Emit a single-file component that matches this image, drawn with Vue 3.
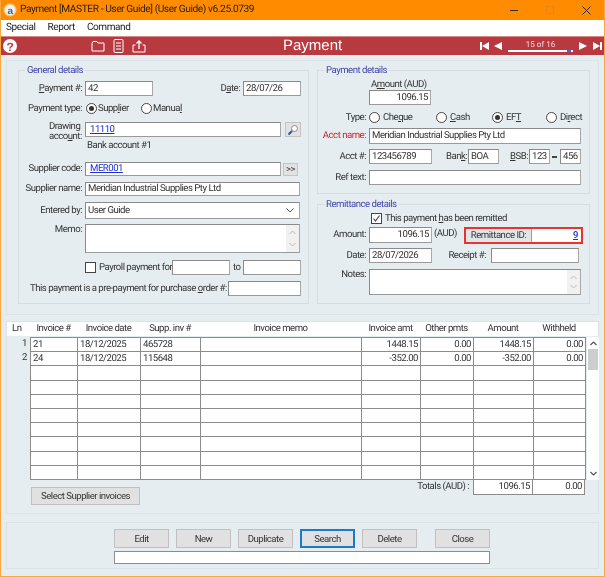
<script setup>
const headers = [
  { t: 'Invoice #', w: 47 }, { t: 'Invoice date', w: 63 }, { t: 'Supp. inv #', w: 60 },
  { t: 'Invoice memo', w: 161 }, { t: 'Invoice amt', w: 59 }, { t: 'Other pmts', w: 53 },
  { t: 'Amount', w: 60 }, { t: 'Withheld', w: 52 }
]
const data = [
  ['21', '18/12/2025', '465728', '', '1448.15', '0.00', '1448.15', '0.00'],
  ['24', '18/12/2025', '115648', '', '-352.00', '0.00', '-352.00', '0.00']
]
const rows = Array.from({ length: 10 }, (_, i) => data[i] || ['', '', '', '', '', '', '', ''])
const buttons = ['Edit', 'New', 'Duplicate', 'Search', 'Delete', 'Close']
</script>

<template>
  <div class="window">
    <header class="title">
      <svg class="logo" width="14" height="14" viewBox="0 0 14 14">
        <circle cx="7" cy="7" r="6.500" fill="#f4c98a" />
        <circle cx="7" cy="7" r="5" fill="#f2f2f2" />
        <text x="7" y="10.500" text-anchor="middle" font-size="10" font-weight="700" font-family="Liberation Sans" fill="#2e6f9e">a</text>
      </svg>
      <span class="title-text">Payment [MASTER - User Guide] (User Guide) v6.25.0739</span>
      <div class="win-btns">
        <svg width="9" height="9" viewBox="0 0 9 9"><path d="M0 4.500H8" stroke="#3a2a10" stroke-width="1" /></svg>
        <svg width="9" height="9" viewBox="0 0 9 9"><rect x="0.500" y="0.500" width="7" height="7" fill="none" stroke="#e5851a" /></svg>
        <svg width="9" height="9" viewBox="0 0 9 9"><path d="M0.500 0.500L8.500 8.500M8.500 0.500L0.500 8.500" stroke="#3a2a10" stroke-width="1" /></svg>
      </div>
    </header>
    <nav class="menu"><span>Special</span><span>Report</span><span>Command</span></nav>
    <div class="redbar">
      <svg class="help" width="14" height="14" viewBox="0 0 14 14">
        <circle cx="7" cy="7" r="7" fill="#fff" />
        <text x="7" y="11.500" text-anchor="middle" font-size="12" font-weight="700" font-family="Liberation Sans" fill="#b83a40">?</text>
      </svg>
      <div class="tools">
        <svg width="14" height="12" viewBox="0 0 14 12"><path d="M1 3V11H13V3H7L6 1.500H2L1 3Z" fill="none" stroke="#fff" /></svg>
        <svg width="11" height="14" viewBox="0 0 11 14"><rect x="1" y="0.500" width="9" height="13" rx="1" fill="none" stroke="#fff" /><path d="M3 4H8M3 7H8M3 10H8" stroke="#fff" /></svg>
        <svg width="14" height="13" viewBox="0 0 14 13"><path d="M3.500 5H1V12H13V5H10.500" fill="none" stroke="#fff" /><path d="M7 9V1M4.500 3.500L7 1L9.500 3.500" fill="none" stroke="#fff" stroke-width="1.300" /></svg>
      </div>
      <div class="bar-title">Payment</div>
      <div class="pager">
        <svg width="9" height="8" viewBox="0 0 9 8"><path d="M0 0H2V8H0ZM9 0V8L2 4Z" fill="#fff" /></svg>
        <svg class="pg2" width="8" height="8" viewBox="0 0 8 8"><path d="M8 0V8L0 4Z" fill="#fff" /></svg>
        <div class="slider"><span class="count">15 of 16</span><span class="track"><i></i></span></div>
        <svg class="pg3" width="8" height="8" viewBox="0 0 8 8"><path d="M0 0V8L8 4Z" fill="#fff" /></svg>
        <svg class="pg4" width="9" height="8" viewBox="0 0 9 8"><path d="M0 0V8L7 4ZM7 0H9V8H7Z" fill="#fff" /></svg>
      </div>
    </div>

    <section class="panel top">
      <div class="group general">
        <span class="legend">General details</span>
        <div class="row h15">
          <label class="lbl"><u>P</u>ayment #:</label>
          <div class="field w68">42</div>
          <label class="date-l">D<u>a</u>te:</label>
          <div class="field w58">28/07/26</div>
        </div>
        <div class="row h15 mt5">
          <label class="lbl">Payment type:</label>
          <span class="radio on r1"></span><span class="rt st">Supp<u>l</u>ier</span>
          <span class="radio"></span><span class="rt">Manua<u>l</u></span>
        </div>
        <div class="row h15 mt6">
          <label class="lbl two">Drawing<br />acco<u>u</u>nt:</label>
          <div class="field w196 link">11110</div>
          <button class="mini glass">
            <svg width="12" height="12" viewBox="0 0 12 12"><circle cx="7.500" cy="4.500" r="3" fill="#fff" stroke="#8a8a8a" /><path d="M5 7L1.500 10.500" stroke="#245a96" stroke-width="2" /></svg>
          </button>
        </div>
        <div class="row bank">Bank account #1</div>
        <div class="row h14 mt10">
          <label class="lbl">Supplier code:</label>
          <div class="field w196 link">MER001</div>
          <button class="mini more">&gt;&gt;</button>
        </div>
        <div class="row h14 mt6">
          <label class="lbl">Supplier name:</label>
          <div class="field w215">Meridian Industrial Supplies Pty Ltd</div>
        </div>
        <div class="row h17 mt6">
          <label class="lbl">Entered by:</label>
          <div class="field w215 select">User Guide
            <svg width="8" height="5" viewBox="0 0 8 5"><path d="M0.500 0.500L4 4L7.500 0.500" fill="none" stroke="#555" /></svg>
          </div>
        </div>
        <div class="row h29 mt5 top-a">
          <label class="lbl">Memo:</label>
          <div class="field w215 area">
            <div class="sb">
              <svg width="7" height="5" viewBox="0 0 7 5"><path d="M0.500 4L3.500 1L6.500 4" fill="none" stroke="#bbb" /></svg>
              <svg width="7" height="5" viewBox="0 0 7 5"><path d="M0.500 1L3.500 4L6.500 1" fill="none" stroke="#bbb" /></svg>
            </div>
          </div>
        </div>
        <div class="row h15 mt7">
          <span class="check c1"></span>
          <span class="payroll">Payroll payment for</span>
          <div class="field w58"></div>
          <span class="to">to</span>
          <div class="field w58"></div>
        </div>
        <div class="row h15 mt6">
          <span class="prepay">This payment is a pre-payment for purchase <u>o</u>rder #:</span>
          <div class="field w73"></div>
        </div>
      </div>

      <div class="side">
        <div class="group payment">
          <span class="legend">Payment details</span>
          <div class="amount-l">A<u>m</u>ount (AUD)</div>
          <div class="row h15 ind"><div class="field num w62">1096.15</div></div>
          <div class="row h15 mt5">
            <label class="lbl2">Type:</label>
            <span class="radio"></span><span class="rt tt1">Che<u>q</u>ue</span>
            <span class="radio"></span><span class="rt tt2"><u>C</u>ash</span>
            <span class="radio on"></span><span class="rt tt3">EF<u>T</u></span>
            <span class="radio"></span><span class="rt tt4">Di<u>r</u>ect</span>
          </div>
          <div class="row h16 mt3">
            <label class="lbl2 red">Acct name:</label>
            <div class="field w212">Meridian Industrial Supplies Pty Ltd</div>
          </div>
          <div class="row h15 mt5">
            <label class="lbl2">Acct #:</label>
            <div class="field w63">123456789</div>
            <label class="bank-l">Ban<u>k</u>:</label>
            <div class="field w31">BOA</div>
            <label class="bsb-l"><u>B</u>SB:</label>
            <div class="field w21">123</div>
            <span class="dash"></span>
            <div class="field w21">456</div>
          </div>
          <div class="row h15 mt6">
            <label class="lbl2">Ref text:</label>
            <div class="field w212"></div>
          </div>
        </div>

        <div class="group remit">
          <span class="legend">Remittance details</span>
          <div class="row h13 ind2">
            <span class="check on">
              <svg width="9" height="9" viewBox="0 0 9 9"><path d="M1.500 4.500L3.500 7L7.500 1.500" fill="none" stroke="#444" stroke-width="1.100" /></svg>
            </span>
            <span class="remitted">This payment <u>h</u>as been remitted</span>
          </div>
          <div class="row h16 mt2">
            <label class="lbl2">Amount:</label>
            <div class="field num w63">1096.15</div>
            <span class="aud">(AUD)</span>
            <div class="rid">
              <span class="rid-l">Remittance ID:</span>
              <span class="rid-v">9</span>
            </div>
          </div>
          <div class="row h15 mt5">
            <label class="lbl2">Date:</label>
            <div class="field w63">28/07/2026</div>
            <label class="rec-l">Receipt #:</label>
            <div class="field w88"></div>
          </div>
          <div class="row h26 mt6 top-a">
            <label class="lbl2">Notes:</label>
            <div class="field w212 area">
              <div class="sb">
                <svg width="7" height="5" viewBox="0 0 7 5"><path d="M0.500 4L3.500 1L6.500 4" fill="none" stroke="#bbb" /></svg>
                <svg width="7" height="5" viewBox="0 0 7 5"><path d="M0.500 1L3.500 4L6.500 1" fill="none" stroke="#bbb" /></svg>
              </div>
            </div>
          </div>
        </div>
      </div>
    </section>

    <section class="panel invoices">
      <div class="thead">
        <span class="ln">Ln</span>
        <span v-for="h in headers" :key="h.t" class="th" :style="{ width: h.w + 'px' }">{{ h.t }}</span>
      </div>
      <div class="tbody">
        <div class="nums"><span>1</span><span>2</span></div>
        <div class="grid">
          <template v-for="(r, i) in rows" :key="i">
            <div v-for="(c, j) in r" :key="j" class="cell" :class="{ numeric: j > 3 }">{{ c }}</div>
          </template>
        </div>
        <div class="scroll">
          <svg width="7" height="5" viewBox="0 0 7 5"><path d="M0.500 4L3.500 1L6.500 4" fill="none" stroke="#555" stroke-width="1.200" /></svg>
          <span class="thumb"></span>
          <svg class="down" width="7" height="5" viewBox="0 0 7 5"><path d="M0.500 1L3.500 4L6.500 1" fill="none" stroke="#555" stroke-width="1.200" /></svg>
        </div>
      </div>
      <div class="foot">
        <button class="btn select-btn">Select Supplier invoices</button>
        <span class="totals">Totals (AUD) :</span>
        <div class="tot t-a">1096.15</div>
        <div class="tot t-b">0.00</div>
      </div>
    </section>

    <section class="panel actions">
      <div class="btn-row">
        <button v-for="b in buttons" :key="b" class="btn act" :class="{ focus: b === 'Search', close: b === 'Close' }">{{ b }}</button>
      </div>
      <div class="status"></div>
    </section>
  </div>
</template>

<style>
html, body { margin: 0; padding: 0; background: #e6edf0; }
</style>

<style scoped>
.window {
  width: 605px; height: 577px; box-sizing: border-box; overflow: hidden; filter: blur(0.300px);
  background: #e6edf0; border-left: 1px solid #f5a940; border-right: 1px solid #f5a940; border-bottom: 1px solid #f5a940;
  font: 9.600px/12px Roboto, "Liberation Sans", Arial, sans-serif; letter-spacing: -0.500px; color: #333; text-rendering: geometricPrecision;
}
.title { height: 20px; margin: 0 -1px; background: #ff8c00; display: flex; align-items: center; padding-left: 3px; color: #33200a; }
.logo { flex: none; }
.title-text { margin-left: 3px; font-size: 10.200px; letter-spacing: -0.430px; }
.win-btns { margin-left: auto; display: flex; gap: 27px; margin-right: 14px; }
.menu { height: 16px; background: #fff; display: flex; align-items: center; font-size: 10px; letter-spacing: -0.400px; color: #222; padding-left: 5px; gap: 12px; }
.redbar { height: 19px; margin: 0 -1px; border-top: 1px solid #d98a80; box-sizing: border-box; background: #b83a40; display: flex; align-items: center; padding-left: 3px; position: relative; color: #fff; }
.help { flex: none; }
.tools { display: flex; align-items: center; gap: 8px; margin-left: 74px; }
.bar-title { position: absolute; left: 283px; top: 0; font: 15px/18px "Liberation Sans", Arial, sans-serif; letter-spacing: 0; }
.pager { margin-left: auto; margin-right: 3px; display: flex; align-items: center; }
.pg2 { margin-left: 5px; }
.slider { width: 65px; margin-left: 6px; display: flex; flex-direction: column; align-items: center; }
.count { font-size: 8px; line-height: 9px; color: #f2d9d9; letter-spacing: 0; }
.track { width: 65px; height: 2px; background: #fff; position: relative; display: block; margin-top: 1px; }
.track i { position: absolute; right: 2px; top: 0; width: 4px; height: 2px; background: #2a6cf0; }
.pg3 { margin-left: 6px; }
.pg4 { margin-left: 6px; }

.panel { border: 1px solid #dbe3e6; box-sizing: border-box; margin-left: 5px; width: 593px; }
.top { height: 255px; margin-top: 5px; padding: 9px 0 0 11px; display: flex; gap: 8px; }
.group { border: 1px solid #d5dde0; box-sizing: border-box; position: relative; }
.legend { position: absolute; left: 6px; top: -6px; background: #e6edf0; padding: 0 2px; color: #4046a8; line-height: 12px; font-size: 9.600px; letter-spacing: -0.500px; }
.general { width: 291px; height: 234px; padding-top: 10px; }
.side { width: 273px; display: flex; flex-direction: column; gap: 10px; }
.payment { height: 124px; padding-top: 6px; }
.remit { height: 100px; padding-top: 7px; }

.row { display: flex; align-items: center; }
.top-a { align-items: flex-start; }
.h13 { height: 13px; } .h14 { height: 14px; } .h15 { height: 15px; } .h16 { height: 16px; } .h17 { height: 17px; } .h26 { height: 26px; } .h29 { height: 29px; }
.mt2 { margin-top: 2px; } .mt3 { margin-top: 3px; } .mt5 { margin-top: 5px; } .mt6 { margin-top: 6px; } .mt7 { margin-top: 7px; } .mt10 { margin-top: 10px; }

.lbl { width: 63px; margin-right: 3px; text-align: right; white-space: nowrap; flex: none; }
.lbl.two { line-height: 10px; align-self: flex-start; margin-top: 0; text-align: left; width: 33px; margin-left: 30px; }
.lbl2 { width: 48px; margin-right: 3px; text-align: right; white-space: nowrap; flex: none; }
.red { color: #c8242c; }

.field {
  height: 100%; box-sizing: border-box; background: #fff; flex: none; border: 1px solid #9a9a9a; border-top-color: #8a8a8a; border-left-color: #8a8a8a; border-right-color: #a8a8a8;
  padding: 0 2px; line-height: 12px; white-space: nowrap; overflow: hidden; display: flex; align-items: center; position: relative;
}
.w21 { width: 21px; } .w31 { width: 31px; } .w58 { width: 58px; } .w62 { width: 62px; } .w63 { width: 63px; } .w68 { width: 68px; } .w73 { width: 73px; } .w88 { width: 88px; } .w196 { width: 196px; } .w212 { width: 212px; } .w215 { width: 215px; }
.num { justify-content: flex-end; }
.link { color: #1a2ed8; text-decoration: underline; padding-left: 4px; }
.date-l { margin-left: auto; margin-right: 3px; }
.general .row > .w58:last-child { margin-right: 7px; }
.r1 { margin-left: 1px; }
.st { width: 43px; }
.radio { width: 11px; height: 11px; box-sizing: border-box; border: 1px solid #444; border-radius: 50%; background: #fff; flex: none; margin-right: 1px; position: relative; }
.radio.on::after { content: ""; position: absolute; left: 2px; top: 2px; width: 5px; height: 5px; border-radius: 50%; background: #333; }
.rt { white-space: nowrap; flex: none; }
.check { width: 11px; height: 11px; box-sizing: border-box; border: 1px solid #444; background: #fff; flex: none; display: flex; align-items: center; justify-content: center; }
.mini { flex: none; padding: 0; margin: 0; box-sizing: border-box; background: #e2e2e2; border: 1px solid #c4c4c4; display: flex; align-items: center; justify-content: center; font: inherit; letter-spacing: inherit; color: #444; }
.glass { width: 16px; height: 15px; margin-left: 4px; }
.more { width: 15px; height: 13px; margin-left: 2px; }
.bank { height: 12px; margin-top: 3px; padding-left: 68px; }
.select { justify-content: space-between; padding: 0 5px 0 2px; }
.area { align-items: stretch; justify-content: flex-end; padding: 0; }
.sb { width: 13px; background: #f1f1f1; display: flex; flex-direction: column; justify-content: space-between; align-items: center; padding: 5px 0; box-sizing: border-box; }
.c1 { margin-left: 66px; }
.payroll { margin: 0 3px 0 3px; width: 70px; white-space: nowrap; flex: none; }
.to { margin: 0 3px; width: 7px; flex: none; }
.prepay { margin-left: 11px; margin-right: 5px; width: 193px; white-space: nowrap; flex: none; }

.amount-l { margin-left: 53px; height: 13px; line-height: 15px; }
.ind { margin-left: 51px; }
.tt1 { width: 53px; margin-left: 2px; }
.tt2 { width: 42px; margin-left: 2px; }
.tt3 { width: 40px; margin-left: 2px; }
.tt4 { margin-left: 2px; }
.bank-l { margin-left: 14px; margin-right: 1px; width: 21px; text-align: right; white-space: nowrap; flex: none; }
.bsb-l { margin-left: 10px; margin-right: 1px; width: 19px; text-align: right; white-space: nowrap; flex: none; }
.dash { width: 5px; height: 2px; background: #444; margin: 0 3px 0 2px; flex: none; }
.ind2 { margin-left: 53px; }
.remitted { margin-left: 3px; white-space: nowrap; }
.aud { margin: -2px 6px 0 2px; width: 24px; white-space: nowrap; flex: none; }
.rid { width: 119px; height: 17px; box-sizing: border-box; border: 2px solid #e8342e; display: flex; flex: none; background: #fff; }
.rid-l { width: 66px; background: #e2e6e8; border-right: 1px solid #9a9a9a; text-align: center; line-height: 13px; box-sizing: border-box; white-space: nowrap; flex: none; }
.rid-v { flex: 1; text-align: right; padding-right: 3px; color: #1a2ed8; text-decoration: underline; font-weight: 500; line-height: 13px; }
.rec-l { margin-left: 9px; margin-right: 5px; width: 45px; text-align: right; white-space: nowrap; flex: none; }

.invoices { height: 193px; margin-top: 6px; }
.thead { height: 14px; background: #fff; display: flex; align-items: center; }
.ln { width: 23px; padding-left: 5px; box-sizing: border-box; flex: none; }
.th { text-align: center; flex: none; white-space: nowrap; }
.tbody { display: flex; height: 143px; margin-top: 1px; }
.nums { width: 23px; flex: none; display: flex; flex-direction: column; align-items: flex-end; padding-right: 3px; box-sizing: border-box; }
.nums span { height: 14.200px; line-height: 14px; }
.grid {
  display: grid; grid-template-columns: 47px 63px 60px 161px 59px 53px 60px 52px; grid-template-rows: repeat(10, 14.200px);
  background: #fff; border-left: 1px solid #8c8c8c; border-top: 1px solid #8c8c8c; flex: none; width: 556px; box-sizing: border-box;
}
.cell { border-right: 1px solid #8c8c8c; border-bottom: 1px solid #8c8c8c; padding: 0 2px; line-height: 13px; box-sizing: border-box; white-space: nowrap; overflow: hidden; }
.cell.numeric { text-align: right; }
.scroll { width: 12px; margin-left: 1px; background: #fff; display: flex; flex-direction: column; align-items: center; padding-top: 4px; box-sizing: border-box; flex: none; }
.thumb { width: 10px; height: 21px; background: #cdcdcd; margin-top: 3px; }
.down { margin-top: auto; margin-bottom: 4px; }
.foot { height: 32px; display: flex; align-items: flex-start; }
.btn { box-sizing: border-box; background: #e1e1e1; border: 1px solid #c0c0c0; font: inherit; letter-spacing: inherit; color: #333; padding: 0; white-space: nowrap; }
.select-btn { width: 109px; height: 18px; margin: 7px 0 0 24px; flex: none; }
.totals { margin: 1px 0 0 259px; width: 70px; text-align: right; flex: none; white-space: nowrap; }
.tot { height: 15px; background: #fff; border-bottom: 1px solid #8c8c8c; border-right: 1px solid #8c8c8c; box-sizing: border-box; text-align: right; padding-right: 2px; line-height: 14px; flex: none; }
.t-a { width: 60px; margin-left: 4px; border-left: 1px solid #8c8c8c; }
.t-b { width: 52px; }

.actions { height: 47px; margin-top: 8px; padding: 6px 0 0 107px; }
.btn-row { display: flex; gap: 7px; height: 19px; }
.act { width: 55px; height: 19px; flex: none; }
.focus { border: 2px solid #1f78d0; }
.close { margin-left: 11px; }
.status { width: 376px; height: 13px; box-sizing: border-box; margin-top: 3px; background: #fff; border: 1px solid #8c8c8c; }
</style>
